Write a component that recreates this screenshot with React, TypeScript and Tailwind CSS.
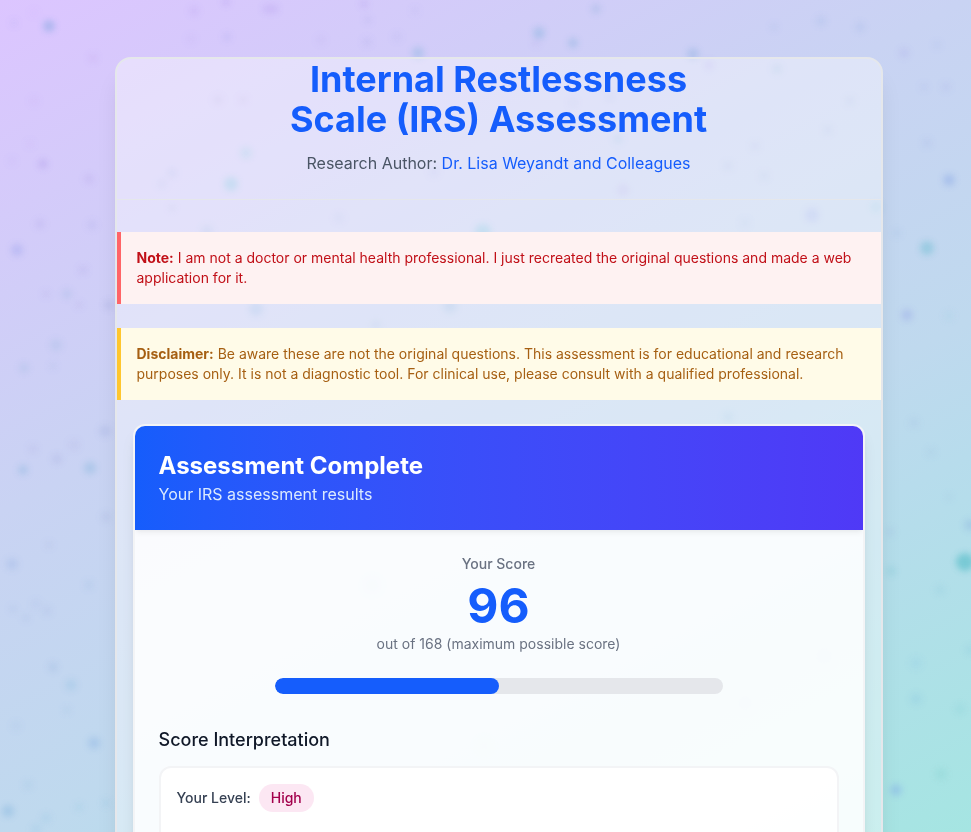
import type { ReactNode } from "react";

const MIN_SCORE = 24;
const MAX_SCORE = 168;

type Particle = [x: number, y: number, r: number, color: string, opacity: number];

const particles: Particle[] = [
  [49, 26, 6, "#7ba4e0", 0.6],
  [14, 23, 4, "#a3a0ec", 0.2],
  [93, 58, 5, "#c0a0ec", 0.25],
  [194, 11, 5, "#b79df0", 0.3],
  [227, 37, 4, "#a3a0ec", 0.3],
  [267, 9, 5, "#a78bea", 0.25],
  [274, 9, 5, "#a78bea", 0.25],
  [191, 39, 5, "#c0a8f0", 0.2],
  [226, 2, 4, "#a78bea", 0.3],
  [321, 40, 5, "#b3a8ec", 0.2],
  [364, 4, 4, "#a78bea", 0.3],
  [367, 42, 5, "#a9a8ea", 0.25],
  [368, 20, 4, "#a9a8ea", 0.25],
  [397, 37, 5, "#a9a8ea", 0.2],
  [415, 11, 4, "#a9a8ea", 0.2],
  [418, 53, 6, "#7fb4dc", 0.5],
  [539, 33, 6, "#7fb0dc", 0.55],
  [573, 43, 5, "#7fb0dc", 0.5],
  [596, 9, 5, "#8fb0dc", 0.4],
  [536, 43, 4, "#b3a8ec", 0.25],
  [693, 54, 6, "#7fa8dc", 0.45],
  [709, 65, 5, "#a9a0f0", 0.4],
  [777, 69, 5, "#8fb8dc", 0.4],
  [774, 27, 4, "#a0b8e8", 0.25],
  [821, 21, 5, "#9fb8e4", 0.35],
  [860, 27, 5, "#9fb4e4", 0.35],
  [904, 53, 5, "#a9a8ea", 0.35],
  [937, 45, 4, "#a9b8ea", 0.25],
  [946, 87, 5, "#a9b0ea", 0.25],
  [924, 87, 4, "#a9b0ea", 0.25],
  [927, 143, 5, "#9fb0e8", 0.25],
  [949, 180, 6, "#88a8e6", 0.6],
  [927, 248, 7, "#6bbdd0", 0.6],
  [907, 315, 6, "#93a5e8", 0.5],
  [897, 233, 4, "#9fb8e4", 0.3],
  [949, 316, 5, "#9fd0e4", 0.3],
  [34, 13, 4, "#d0b0f8", 0.2],
  [43, 164, 5, "#a58fe6", 0.4],
  [12, 161, 4, "#b9a8f0", 0.2],
  [89, 179, 5, "#b09ae8", 0.3],
  [34, 101, 5, "#c6a8f0", 0.2],
  [30, 144, 4, "#c6a8f0", 0.2],
  [40, 224, 5, "#a9a0e8", 0.3],
  [92, 225, 5, "#a9a8e8", 0.3],
  [17, 250, 6, "#9a9fee", 0.5],
  [83, 270, 5, "#a9a0e8", 0.25],
  [67, 294, 5, "#98b4e0", 0.35],
  [46, 294, 4, "#b0a8e8", 0.25],
  [109, 305, 5, "#98a0d8", 0.35],
  [79, 305, 4, "#b0a8e8", 0.25],
  [56, 345, 6, "#98b8e0", 0.35],
  [24, 368, 5, "#98b8e0", 0.35],
  [53, 366, 4, "#a8b8e8", 0.25],
  [105, 431, 6, "#98a8dc", 0.35],
  [23, 470, 5, "#7fb0dc", 0.45],
  [90, 468, 6, "#7fb4dc", 0.5],
  [57, 459, 5, "#a0a8dc", 0.35],
  [33, 449, 5, "#b0b0e4", 0.25],
  [74, 445, 6, "#b0b0e4", 0.25],
  [106, 517, 5, "#a0b0dc", 0.3],
  [49, 545, 4, "#a8b0e0", 0.25],
  [12, 564, 6, "#94b0e4", 0.4],
  [89, 585, 5, "#94b8e4", 0.25],
  [13, 609, 4, "#a0b0e4", 0.25],
  [36, 604, 5, "#a0b0e4", 0.2],
  [47, 611, 5, "#a0b0e4", 0.25],
  [26, 618, 4, "#a0b0e4", 0.25],
  [53, 667, 5, "#8fb0dc", 0.35],
  [71, 685, 6, "#88bbe0", 0.35],
  [67, 710, 4, "#9ac0e4", 0.25],
  [94, 743, 6, "#84b0e4", 0.5],
  [16, 726, 5, "#9ab8e4", 0.2],
  [28, 785, 5, "#94c0e4", 0.25],
  [8, 811, 6, "#7ab0dc", 0.5],
  [46, 818, 5, "#90c0e0", 0.3],
  [79, 807, 4, "#90c8e0", 0.3],
  [106, 803, 4, "#90c0e0", 0.3],
  [36, 829, 5, "#90c0e0", 0.3],
  [965, 562, 9, "#4cb9c5", 0.75],
  [891, 571, 5, "#7cc5d4", 0.4],
  [890, 532, 5, "#9fb8e0", 0.3],
  [914, 423, 5, "#9fb8e0", 0.3],
  [931, 452, 5, "#9fc0e0", 0.25],
  [970, 525, 6, "#80a8dc", 0.4],
  [940, 590, 5, "#8cc8dc", 0.3],
  [949, 497, 4, "#9fc8e4", 0.25],
  [970, 650, 5, "#80c4dc", 0.3],
  [916, 663, 6, "#90cbe8", 0.3],
  [916, 699, 6, "#88c4e0", 0.35],
  [960, 709, 5, "#84cfd8", 0.35],
  [941, 774, 6, "#84d0d0", 0.4],
  [896, 790, 6, "#84aeea", 0.6],
  [246, 153, 6, "#88c4e0", 0.5],
  [231, 184, 7, "#78bfdf", 0.65],
  [172, 173, 5, "#a0b0e8", 0.4],
  [162, 184, 5, "#a0b0e8", 0.3],
  [218, 100, 5, "#a99fdc", 0.3],
  [243, 100, 5, "#b0a0e0", 0.25],
  [172, 208, 4, "#a0a8e8", 0.25],
  [207, 231, 6, "#90b0e0", 0.4],
  [339, 218, 5, "#a0b0e0", 0.3],
  [256, 309, 7, "#88b0e4", 0.5],
  [434, 172, 5, "#a0a8e8", 0.3],
  [483, 232, 8, "#70c0dc", 0.6],
  [450, 306, 7, "#88b0dc", 0.45],
  [376, 325, 5, "#98b4e0", 0.35],
  [573, 103, 5, "#a0b0e0", 0.2],
  [610, 97, 5, "#a0b0e0", 0.25],
  [618, 139, 5, "#8fbce0", 0.4],
  [623, 190, 6, "#a89cea", 0.35],
  [755, 146, 5, "#a0a8e8", 0.25],
  [728, 166, 5, "#98a8e0", 0.25],
  [828, 130, 5, "#98a8e0", 0.25],
  [850, 101, 5, "#98a8e0", 0.25],
  [812, 215, 7, "#98a8ee", 0.5],
  [745, 223, 5, "#98b8e0", 0.25],
  [764, 176, 5, "#98b0e0", 0.25],
  [876, 207, 6, "#88c8e0", 0.35],
  [728, 417, 5, "#88b8e0", 0.35],
  [372, 585, 9, "#80b8dc", 0.3],
  [824, 656, 10, "#90b0e8", 0.35],
  [745, 703, 9, "#90b0e0", 0.35],
  [484, 746, 8, "#90b8e0", 0.3],
];

function ParticleField() {
  return (
    <svg className="pointer-events-none absolute inset-0 h-full w-full" aria-hidden="true">
      <defs>
        <filter id="soften" x="-10%" y="-10%" width="120%" height="120%">
          <feGaussianBlur stdDeviation="3" />
        </filter>
      </defs>
      <g filter="url(#soften)" opacity="0.75">
        {particles.map(([x, y, r, color, opacity], i) => (
          <circle key={i} cx={x} cy={y} r={r} fill={color} opacity={opacity} />
        ))}
      </g>
    </svg>
  );
}

function Notice({ label, className, children }: { label: string; className: string; children: ReactNode }) {
  return (
    <p className={`border-l-4 p-4 text-sm ${className}`}>
      <strong className="font-bold">{label}</strong> {children}
    </p>
  );
}

function Results({ score }: { score: number }) {
  const percent = ((score - MIN_SCORE) / (MAX_SCORE - MIN_SCORE)) * 100;
  return (
    <section className="mx-4 overflow-hidden rounded-xl border-2 border-gray-100 bg-white/85 shadow-lg">
      <header className="bg-linear-to-r from-blue-600 to-indigo-600 p-6 shadow-md shadow-black/5">
        <h2 className="text-2xl font-bold text-white">Assessment Complete</h2>
        <p className="text-blue-100">Your IRS assessment results</p>
      </header>
      <div className="p-6">
        <div className="text-center">
          <p className="text-sm font-medium text-gray-500">Your Score</p>
          <p className="mt-2 mb-1 text-5xl leading-12 font-bold text-blue-600">{score}</p>
          <p className="text-sm text-gray-500">out of {MAX_SCORE} (maximum possible score)</p>
        </div>
        <div
          className="mx-auto mt-6 h-4 max-w-md overflow-hidden rounded-full bg-gray-200"
          role="progressbar"
          aria-label="Score"
          aria-valuemin={MIN_SCORE}
          aria-valuemax={MAX_SCORE}
          aria-valuenow={score}
        >
          <div className="h-full rounded-full bg-blue-600" style={{ width: `${percent}%` }} />
        </div>
        <h3 className="mt-8 mb-3 text-lg font-medium text-gray-900">Score Interpretation</h3>
        <div className="min-h-48 rounded-xl border-2 border-gray-100 bg-white/90 p-4">
          <div className="flex items-center gap-2 text-sm font-medium">
            <span className="text-gray-700">Your Level:</span>
            <span className="rounded-full bg-pink-100 px-3 py-1 text-pink-800">High</span>
          </div>
        </div>
      </div>
    </section>
  );
}

export default function App() {
  return (
    <div className="relative h-screen overflow-hidden bg-[linear-gradient(152deg,#dcc5ff_0%,#c9d3f3_38%,#bfd9ee_62%,#b7dcec_72%,#a5e5e2_100%)] font-['Inter',sans-serif]">
      <ParticleField />
      <div className="relative pt-[57px] pl-[26px]">
        <main className="mx-auto max-w-3xl rounded-2xl border-2 border-gray-200 bg-white/40 pb-8 shadow-xl">
          <header className="mb-8 border-b border-gray-200 pb-6 text-center">
            <h1 className="mb-3 text-4xl font-bold text-blue-600">
              Internal Restlessness
              <br />
              Scale (IRS) Assessment
            </h1>
            <p className="text-gray-600">
              Research Author:{" "}
              <a href="#author" className="text-blue-600">
                Dr. Lisa Weyandt and Colleagues
              </a>
            </p>
          </header>
          <div className="flex flex-col gap-6">
            <Notice label="Note:" className="border-[#ff6467] bg-red-50 text-[#c11018]">
              I am not a doctor or mental health professional. I just recreated the original questions and made a web
              application for it.
            </Notice>
            <Notice label="Disclaimer:" className="border-[#ffc62e] bg-[#fffbe8] text-[#a65f12]">
              Be aware these are not the original questions. This assessment is for educational and research purposes
              only. It is not a diagnostic tool. For clinical use, please consult with a qualified professional.
            </Notice>
            <Results score={96} />
          </div>
        </main>
      </div>
    </div>
  );
}
